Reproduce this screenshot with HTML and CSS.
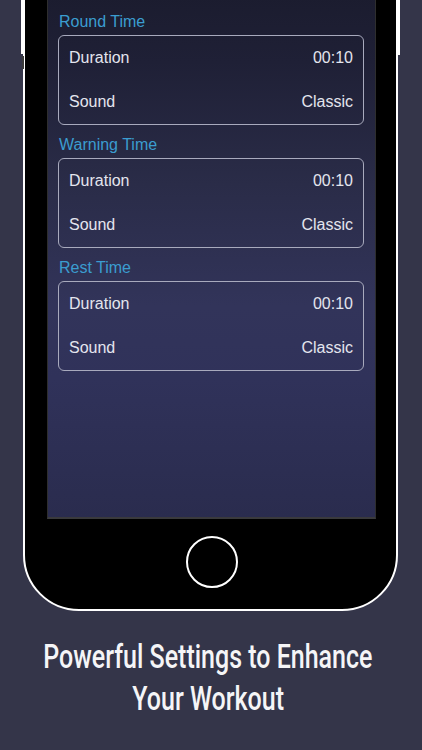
FILE: index.html
```html
<!DOCTYPE html>
<html>
<head>
<meta charset="utf-8">
<link rel="stylesheet" href="styles.css">
</head>
<body>
<div class="page">
  <div class="phone">
    <span class="btn-left"></span>
    <span class="btn-left-gap"></span>
    <span class="btn-right"></span>
    <div class="screen">
      <div class="section">
        <div class="sec-title">Round Time</div>
        <div class="card">
          <div class="row"><span>Duration</span><span>00:10</span></div>
          <div class="row"><span>Sound</span><span>Classic</span></div>
        </div>
      </div>
      <div class="section">
        <div class="sec-title">Warning Time</div>
        <div class="card">
          <div class="row"><span>Duration</span><span>00:10</span></div>
          <div class="row"><span>Sound</span><span>Classic</span></div>
        </div>
      </div>
      <div class="section">
        <div class="sec-title">Rest Time</div>
        <div class="card">
          <div class="row"><span>Duration</span><span>00:10</span></div>
          <div class="row"><span>Sound</span><span>Classic</span></div>
        </div>
      </div>
    </div>
    <div class="home-area">
      <div class="home"></div>
    </div>
  </div>
  <div class="headline">
    <div class="hl-line"><span class="hl-text">Powerful Settings to Enhance</span></div>
    <div class="hl-line"><span class="hl-text">Your Workout</span></div>
  </div>
</div>
</body>
</html>
```
FILE: styles.css
```css
html, body {
  margin: 0;
  padding: 0;
  background: #343549;
  width: 422px;
  height: 750px;
  overflow: hidden;
}
.page {
  width: 422px;
  height: 750px;
  overflow: hidden;
}
.phone {
  position: relative;
  box-sizing: border-box;
  margin: -100px 0 0 23px;
  width: 375px;
  height: 711px;
  border: 2px solid #ffffff;
  border-radius: 0 0 56px 56px;
  background: #000;
  display: flex;
  flex-direction: column;
}
.btn-left {
  position: absolute;
  left: -4px;
  top: 0;
  width: 2px;
  height: 152px;
  background: #fff;
}
.btn-left-gap {
  position: absolute;
  left: -3px;
  top: 154px;
  width: 2px;
  height: 13px;
  background: #3a3a3a;
}
.btn-right {
  position: absolute;
  right: -4px;
  top: 0;
  width: 2px;
  height: 153px;
  background: #fff;
}
.screen {
  box-sizing: border-box;
  margin: 60px 20px 0 22px;
  height: 557px;
  padding: 50px 11px 0 10px;
  border: 1px solid #2e2e2e;
  border-top: none;
  border-bottom: 2px solid #3a3a3c;
  background: linear-gradient(180deg, #191a2b 0%, #1f2036 18%, #2a2c48 40%, #32345a 62%, #30325a 75%, #2a2c4e 100%);
  font-family: "Liberation Sans", Arial, sans-serif;
  display: flex;
  flex-direction: column;
  gap: 10px;
}
.sec-title {
  font-size: 16px;
  line-height: 20px;
  height: 20px;
  margin-bottom: 3px;
  color: #3b9dd0;
  padding-left: 1px;
}
.card {
  box-sizing: border-box;
  height: 90px;
  border: 1px solid #a8aabd;
  border-radius: 6px;
  display: flex;
  flex-direction: column;
}
.row {
  flex: 1;
  display: flex;
  justify-content: space-between;
  align-items: center;
  padding: 0 10px;
  font-size: 16px;
  color: #e4e5ee;
}
.home-area {
  flex: 1;
  display: flex;
  align-items: center;
  justify-content: center;
  padding-bottom: 4px;
}
.home {
  box-sizing: border-box;
  width: 52px;
  height: 52px;
  border: 2.5px solid #ffffff;
  border-radius: 50%;
  margin-left: 2px;
}
.headline {
  margin-top: 24px;
  padding-right: 6px;
  font-family: Roboto, "Liberation Sans", sans-serif;
  font-weight: 500;
  color: #f5f5f7;
  font-size: 34px;
  line-height: 42px;
}
.hl-line {
  display: flex;
  justify-content: center;
  white-space: nowrap;
}
.hl-text {
  display: inline-block;
  transform: scaleX(0.735);
  transform-origin: center;
}
```
